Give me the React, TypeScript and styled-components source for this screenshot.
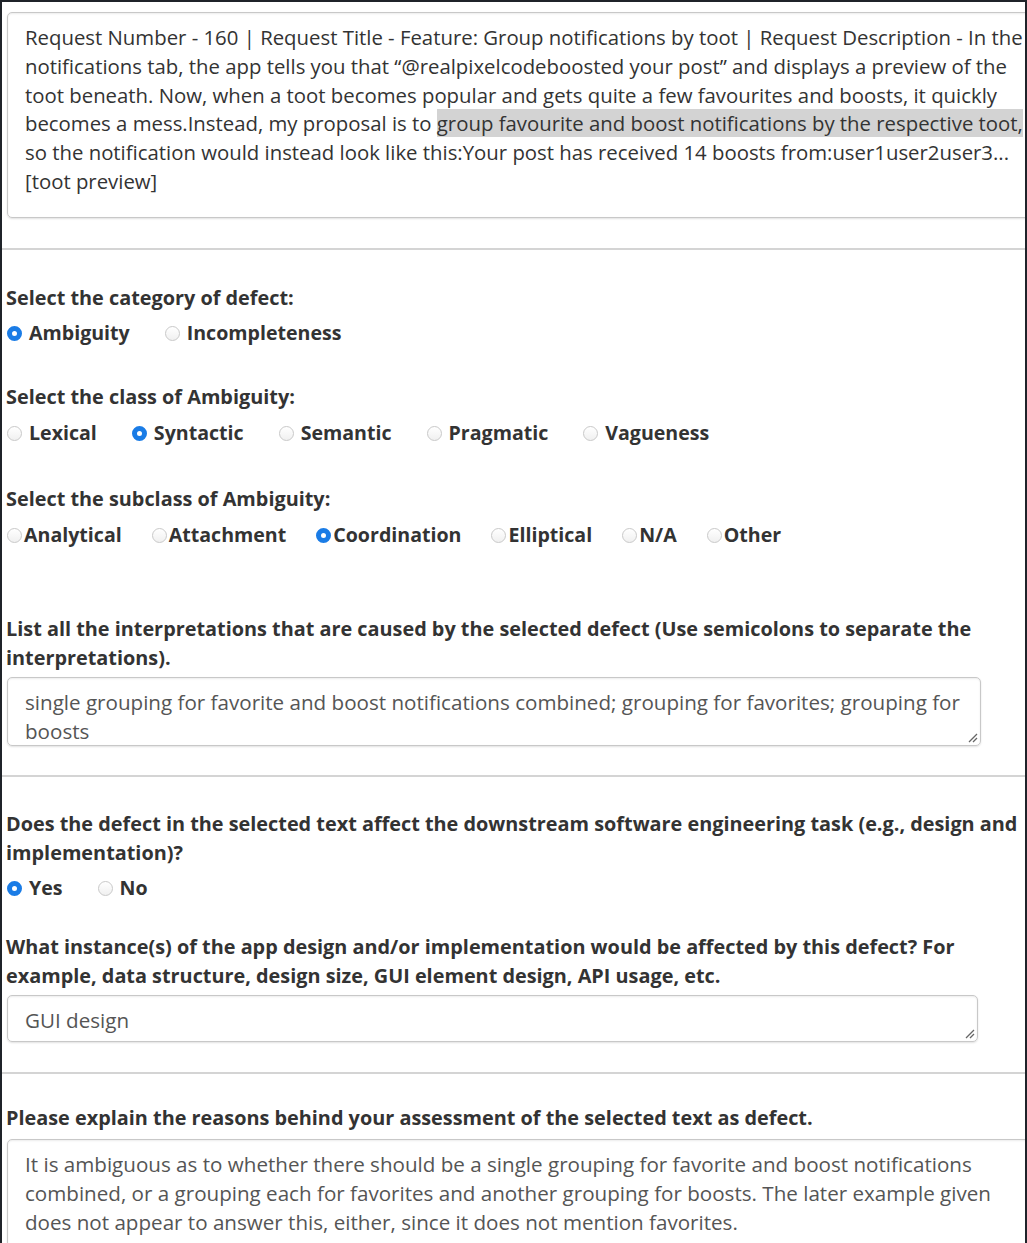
import React from "react";
import styled, { createGlobalStyle } from "styled-components";

const Global = createGlobalStyle`
  html, body { margin: 0; padding: 0; background: #1f2329; }
  body { font-family: "Open Sans", "Liberation Sans", sans-serif; }
  * { box-sizing: border-box; }
`;

const Frame = styled.div`
  margin: 2px 2px 0 2px;
  height: 1241px;
  background: #ffffff;
  overflow: hidden;
  padding-left: 4px;
  color: #333333;
`;

const Box = styled.div<{ $w: string; $h: number; $mt: number; $color?: string; $fs?: number }>`
  margin-top: ${(p) => p.$mt}px;
  margin-left: 1px;
  width: ${(p) => p.$w};
  height: ${(p) => p.$h}px;
  border: 1px solid #c8c8c8;
  border-radius: 5px;
  box-shadow: inset 0 1px 2px rgba(0, 0, 0, 0.08), 0 1px 2px rgba(0, 0, 0, 0.12);
  padding: 10px 0 0 17px;
  font-size: ${(p) => p.$fs ?? 20.6}px;
  line-height: 28.8px;
  color: ${(p) => p.$color ?? "#555555"};
  position: relative;
  overflow: hidden;
`;

const Line = styled.div`
  white-space: nowrap;
`;

const Mark = styled.span`
  background: #d3d3d3;
`;

const Grip = styled.svg`
  position: absolute;
  right: 2px;
  bottom: 2px;
  width: 12px;
  height: 12px;
`;

const Rule = styled.div<{ $mt: number }>`
  margin-top: ${(p) => p.$mt}px;
  margin-left: -4px;
  height: 2px;
  background: #d4d4d4;
`;

const Heading = styled.div<{ $mt: number }>`
  margin-top: ${(p) => p.$mt}px;
  font-size: 19.85px;
  line-height: 29px;
  font-weight: 700;
  color: #333333;
  white-space: nowrap;
`;

const Row = styled.div<{ $mt: number; $gap: number }>`
  margin-top: ${(p) => p.$mt}px;
  display: flex;
  align-items: center;
  gap: ${(p) => p.$gap}px;
  height: 29px;
  padding-left: 1px;
`;

const Option = styled.label<{ $inner: number }>`
  display: flex;
  align-items: center;
  gap: ${(p) => p.$inner}px;
  font-size: 19.6px;
  font-weight: 700;
  color: #333333;
`;

const Dot = styled.span<{ $on?: boolean }>`
  width: 15px;
  height: 15px;
  border-radius: 50%;
  flex: none;
  margin-top: 1px;
  ${(p) =>
    p.$on
      ? `background: #ffffff; border: 5px solid #1a7ce6;`
      : `background: linear-gradient(#ffffff, #f0f0f0); border: 1px solid #c9c9c9;`}
`;

const GripIcon = () => (
  <Grip viewBox="0 0 12 12">
    <path d="M11 3 L3 11 M11 7 L7 11" stroke="#666" strokeWidth="1.3" />
  </Grip>
);

type Opt = { label: string; on?: boolean };

const Radios = ({ opts, mt, gap, inner }: { opts: Opt[]; mt: number; gap: number; inner: number }) => (
  <Row $mt={mt} $gap={gap}>
    {opts.map((o) => (
      <Option key={o.label} $inner={inner}>
        <Dot $on={o.on} />
        {o.label}
      </Option>
    ))}
  </Row>
);

export default function App() {
  return (
    <>
      <Global />
      <Frame>
        <Box $w="1040px" $h={206} $mt={10} $color="#333333" $fs={20.35}>
          <Line>
            Request Number - 160 | Request Title - Feature: Group notifications by toot | Request Description - In the
          </Line>
          <Line>
            notifications tab, the app tells you that “@realpixelcodeboosted your post” and displays a preview of the
          </Line>
          <Line>toot beneath. Now, when a toot becomes popular and gets quite a few favourites and boosts, it quickly</Line>
          <Line>
            becomes a mess.Instead, my proposal is to{" "}
            <Mark>group favourite and boost notifications by the respective toot,</Mark>
          </Line>
          <Line>so the notification would instead look like this:Your post has received 14 boosts from:user1user2user3...</Line>
          <Line>[toot preview]</Line>
        </Box>
        <Rule $mt={30} />
        <Heading $mt={33}>Select the category of defect:</Heading>
        <Radios
          mt={6}
          gap={35}
          inner={7}
          opts={[{ label: "Ambiguity", on: true }, { label: "Incompleteness" }]}
        />
        <Heading $mt={35}>Select the class of Ambiguity:</Heading>
        <Radios
          mt={7}
          gap={35}
          inner={7}
          opts={[
            { label: "Lexical" },
            { label: "Syntactic", on: true },
            { label: "Semantic" },
            { label: "Pragmatic" },
            { label: "Vagueness" },
          ]}
        />
        <Heading $mt={37}>Select the subclass of Ambiguity:</Heading>
        <Radios
          mt={7}
          gap={30}
          inner={2}
          opts={[
            { label: "Analytical" },
            { label: "Attachment" },
            { label: "Coordination", on: true },
            { label: "Elliptical" },
            { label: "N/A" },
            { label: "Other" },
          ]}
        />
        <Heading $mt={65}>
          List all the interpretations that are caused by the selected defect (Use semicolons to separate the
          <br />
          interpretations).
        </Heading>
        <Box $w="974px" $h={69} $mt={5}>
          <Line>single grouping for favorite and boost notifications combined; grouping for favorites; grouping for</Line>
          <Line>boosts</Line>
          <GripIcon />
        </Box>
        <Rule $mt={29} />
        <Heading $mt={32}>
          Does the defect in the selected text affect the downstream software engineering task (e.g., design and
          <br />
          implementation)?
        </Heading>
        <Radios mt={6} gap={35} inner={7} opts={[{ label: "Yes", on: true }, { label: "No" }]} />
        <Heading $mt={30}>
          What instance(s) of the app design and/or implementation would be affected by this defect? For
          <br />
          example, data structure, design size, GUI element design, API usage, etc.
        </Heading>
        <Box $w="971px" $h={47} $mt={5}>
          <Line>GUI design</Line>
          <GripIcon />
        </Box>
        <Rule $mt={30} />
        <Heading $mt={29}>Please explain the reasons behind your assessment of the selected text as defect.</Heading>
        <Box $w="1030px" $h={110} $mt={7}>
          <Line>It is ambiguous as to whether there should be a single grouping for favorite and boost notifications</Line>
          <Line>combined, or a grouping each for favorites and another grouping for boosts. The later example given</Line>
          <Line>does not appear to answer this, either, since it does not mention favorites.</Line>
        </Box>
      </Frame>
    </>
  );
}
